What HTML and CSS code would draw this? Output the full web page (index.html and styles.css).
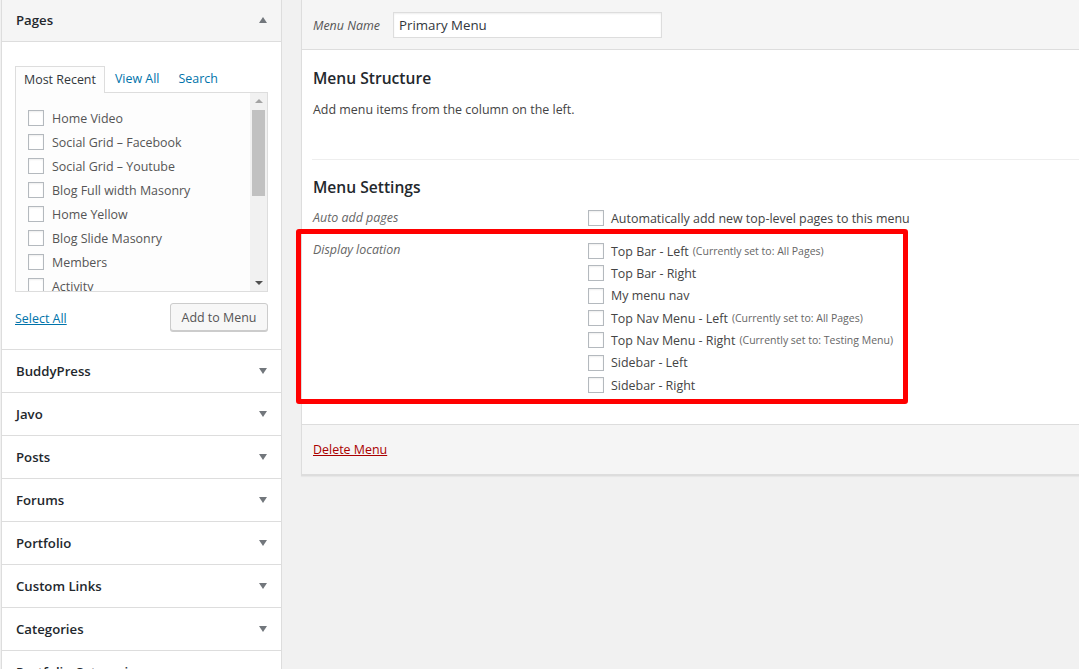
FILE: index.html
```html
<!DOCTYPE html>
<html>
<head>
<meta charset="utf-8">
<link rel="stylesheet" href="styles.css">
</head>
<body>
<div class="page">
  <aside class="side">
    <section class="box">
      <div class="box-head"><span>Pages</span><i class="tri up"></i></div>
      <div class="box-body">
        <ul class="tabs">
          <li class="tab active">Most Recent</li>
          <li class="tab"><a href="#">View All</a></li>
          <li class="tab"><a href="#">Search</a></li>
        </ul>
        <div class="tab-panel">
          <ul class="checklist">
            <li><span class="cb"></span>Home Video</li>
            <li><span class="cb"></span>Social Grid – Facebook</li>
            <li><span class="cb"></span>Social Grid – Youtube</li>
            <li><span class="cb"></span>Blog Full width Masonry</li>
            <li><span class="cb"></span>Home Yellow</li>
            <li><span class="cb"></span>Blog Slide Masonry</li>
            <li><span class="cb"></span>Members</li>
            <li><span class="cb"></span>Activity</li>
          </ul>
          <div class="scrollbar">
            <i class="sb-up"></i>
            <div class="sb-track"><div class="sb-thumb"></div></div>
            <i class="sb-down"></i>
          </div>
        </div>
        <div class="actions">
          <a href="#" class="select-all">Select All</a>
          <button class="btn">Add to Menu</button>
        </div>
      </div>
    </section>
    <section class="acc"><span>BuddyPress</span><i class="tri down"></i></section>
    <section class="acc"><span>Javo</span><i class="tri down"></i></section>
    <section class="acc"><span>Posts</span><i class="tri down"></i></section>
    <section class="acc"><span>Forums</span><i class="tri down"></i></section>
    <section class="acc"><span>Portfolio</span><i class="tri down"></i></section>
    <section class="acc"><span>Custom Links</span><i class="tri down"></i></section>
    <section class="acc"><span>Categories</span><i class="tri down"></i></section>
    <section class="acc"><span>Portfolio Categories</span><i class="tri down"></i></section>
  </aside>

  <main class="editor">
    <div class="editor-head">
      <label class="name-label">Menu Name</label>
      <input class="name-input" type="text" value="Primary Menu">
    </div>
    <div class="editor-body">
      <h3 class="h-structure">Menu Structure</h3>
      <p class="hint">Add menu items from the column on the left.</p>
      <div class="divider"></div>
      <h3 class="h-settings">Menu Settings</h3>
      <div class="setting auto">
        <div class="s-label">Auto add pages</div>
        <div class="s-opts">
          <div class="opt"><span class="cb"></span>Automatically add new top-level pages to this menu</div>
        </div>
      </div>
      <div class="setting loc">
        <div class="s-label">Display location</div>
        <div class="s-opts">
          <div class="opt"><span class="cb"></span>Top Bar - Left <small>(Currently set to: All Pages)</small></div>
          <div class="opt"><span class="cb"></span>Top Bar - Right</div>
          <div class="opt"><span class="cb"></span>My menu nav</div>
          <div class="opt"><span class="cb"></span>Top Nav Menu - Left <small>(Currently set to: All Pages)</small></div>
          <div class="opt"><span class="cb"></span>Top Nav Menu - Right <small>(Currently set to: Testing Menu)</small></div>
          <div class="opt"><span class="cb"></span>Sidebar - Left</div>
          <div class="opt"><span class="cb"></span>Sidebar - Right</div>
        </div>
      </div>
      <div class="highlight"></div>
    </div>
    <div class="editor-foot">
      <a href="#" class="delete">Delete Menu</a>
    </div>
  </main>
</div>
</body>
</html>
```
FILE: styles.css
```css
* { box-sizing: border-box; }
html, body { margin: 0; padding: 0; }
body {
  background: #f1f1f1;
  font-family: "Open Sans", "Noto Sans", sans-serif;
  font-size: 12.45px;
  color: #444;
  overflow: hidden;
  width: 1079px;
  height: 669px;
}
ul { list-style: none; margin: 0; padding: 0; }
a { color: #0073aa; }

.page {
  display: flex;
  align-items: flex-start;
  padding-left: 1px;
}

/* ---------- sidebar ---------- */
.side {
  width: 281px;
  flex: none;
  background: #fff;
  border-left: 1px solid #ddd;
  border-right: 1px solid #ddd;
}
.box { border-bottom: 1px solid #ddd; }
.box-head {
  height: 42px;
  background: #f5f5f5;
  border-bottom: 1px solid #ddd;
  display: flex;
  align-items: center;
  justify-content: space-between;
  padding: 0 14px 2px 14px;
  font-size: 13.2px;
  font-weight: 600;
  color: #23282d;
}
.tri {
  display: block;
  width: 0;
  height: 0;
  border-left: 4.5px solid transparent;
  border-right: 4.5px solid transparent;
}
.tri.up { border-bottom: 6px solid #72777c; margin-top: 0; }
.tri.down { border-top: 6px solid #72777c; }

.box-body {
  padding: 24px 13px 18px 13px;
}
.tabs {
  display: flex;
  align-items: flex-end;
  height: 26px;
  position: relative;
  z-index: 1;
}
.tab {
  height: 26px;
  line-height: 26px;
  padding: 0 9px;
  color: #0073aa;
  white-space: nowrap;
}
.tab a { text-decoration: none; }
.tab.active {
  border: 1px solid #ddd;
  border-bottom: none;
  background: #fdfdfd;
  color: #32373c;
  height: 27px;
  margin-bottom: -1px;
  padding: 0 8px;
}
.tab:nth-child(2) { padding-left: 10px; }
.tab:nth-child(3) { padding-left: 10px; }

.tab-panel {
  height: 200px;
  border: 1px solid #ddd;
  background: #fdfdfd;
  position: relative;
  overflow: hidden;
  display: flex;
}
.checklist {
  flex: 1;
  padding: 13px 0 0 12px;
}
.checklist li {
  height: 24px;
  display: flex;
  align-items: center;
  color: #555;
  white-space: nowrap;
}
.cb {
  display: inline-block;
  flex: none;
  width: 16px;
  height: 16px;
  border: 1px solid #b4b9be;
  background: #fff;
  box-shadow: inset 0 1px 2px rgba(0,0,0,0.07);
  margin-right: 8px;
}
.scrollbar {
  width: 17px;
  flex: none;
  background: #f1f1f1;
  display: flex;
  flex-direction: column;
  align-items: center;
}
.sb-up, .sb-down {
  display: block;
  width: 0; height: 0;
  border-left: 4px solid transparent;
  border-right: 4px solid transparent;
  margin: 6px 0;
}
.sb-up { border-bottom: 4px solid #a3a3a3; }
.sb-down { border-top: 4px solid #505050; }
.sb-track { flex: 1; width: 100%; padding: 0 2px; }
.sb-thumb { height: 86px; background: #c1c1c1; margin-top: 1px; }

.actions {
  margin-top: 11px;
  display: flex;
  justify-content: space-between;
  align-items: center;
  height: 28px;
}
.select-all { text-decoration: underline; margin-top: 2px; }
.btn {
  font-family: inherit;
  font-size: 12.45px;
  color: #555;
  background: #f7f7f7;
  border: 1px solid #ccc;
  border-radius: 3px;
  box-shadow: 0 1px 0 #ccc;
  height: 28px;
  width: 98px;
  padding: 0;
}

.acc {
  height: 43px;
  border-bottom: 1px solid #ddd;
  display: flex;
  align-items: center;
  justify-content: space-between;
  padding: 0 14px 0 14px;
  font-size: 13.2px;
  font-weight: 600;
  color: #23282d;
}

/* ---------- editor ---------- */
.editor {
  margin-left: 19px;
  width: 820px;
  flex: none;
  border: 1px solid #ddd;
  border-right: none;
  border-top: none;
  background: #fff;
  box-shadow: 0 1px 1px rgba(0,0,0,0.04);
}
.editor-head {
  height: 50px;
  background: #f5f5f5;
  border-bottom: 1px solid #ddd;
  display: flex;
  align-items: center;
  padding: 0 0 0 11px;
}
.name-label {
  font-style: italic;
  color: #555;
  width: 80px;
  margin-top: 1px;
}
.name-input {
  width: 269px;
  height: 26px;
  border: 1px solid #ddd;
  box-shadow: inset 0 1px 2px rgba(0,0,0,0.07);
  background: #fff;
  font-family: inherit;
  font-size: 13.3px;
  color: #32373c;
  padding: 0 5px;
}
.editor-body {
  position: relative;
  padding: 18px 0 27px 11px;
  height: 374px;
}
h3 {
  margin: 0;
  font-size: 15.6px;
  font-weight: 600;
  line-height: 20px;
  color: #23282d;
}
.hint { margin: 12px 0 0; line-height: 20px; }
.divider {
  height: 1px;
  background: #eee;
  margin: 39px 0 0 -1px;
}
.h-settings { margin-top: 17px; }
.setting { display: flex; }
.setting.auto { margin-top: 10px; }
.setting.loc { margin-top: 11px; }
.s-label {
  width: 275px;
  flex: none;
  font-style: italic;
  color: #666;
  line-height: 22px;
}
.setting.loc .s-label { line-height: 20px; }
.opt {
  height: 22.33px;
  display: flex;
  align-items: center;
  white-space: nowrap;
  color: #444;
}
.opt .cb { margin-right: 7px; }
.opt small {
  font-size: 10.5px;
  color: #666;
  margin-left: 4px;
}
.setting.auto .opt { height: 22px; }

.highlight {
  position: absolute;
  left: -6px;
  top: 179px;
  width: 612px;
  height: 175px;
  border: 5px solid #ff0000;
  border-radius: 3px;
  pointer-events: none;
}

.editor-foot {
  height: 51px;
  background: #f5f5f5;
  border-top: 1px solid #ddd;
  border-bottom: 1px solid #ddd;
  display: flex;
  align-items: center;
  padding: 0 0 0 11px;
}
.delete { color: #a00; text-decoration: underline; }
```
